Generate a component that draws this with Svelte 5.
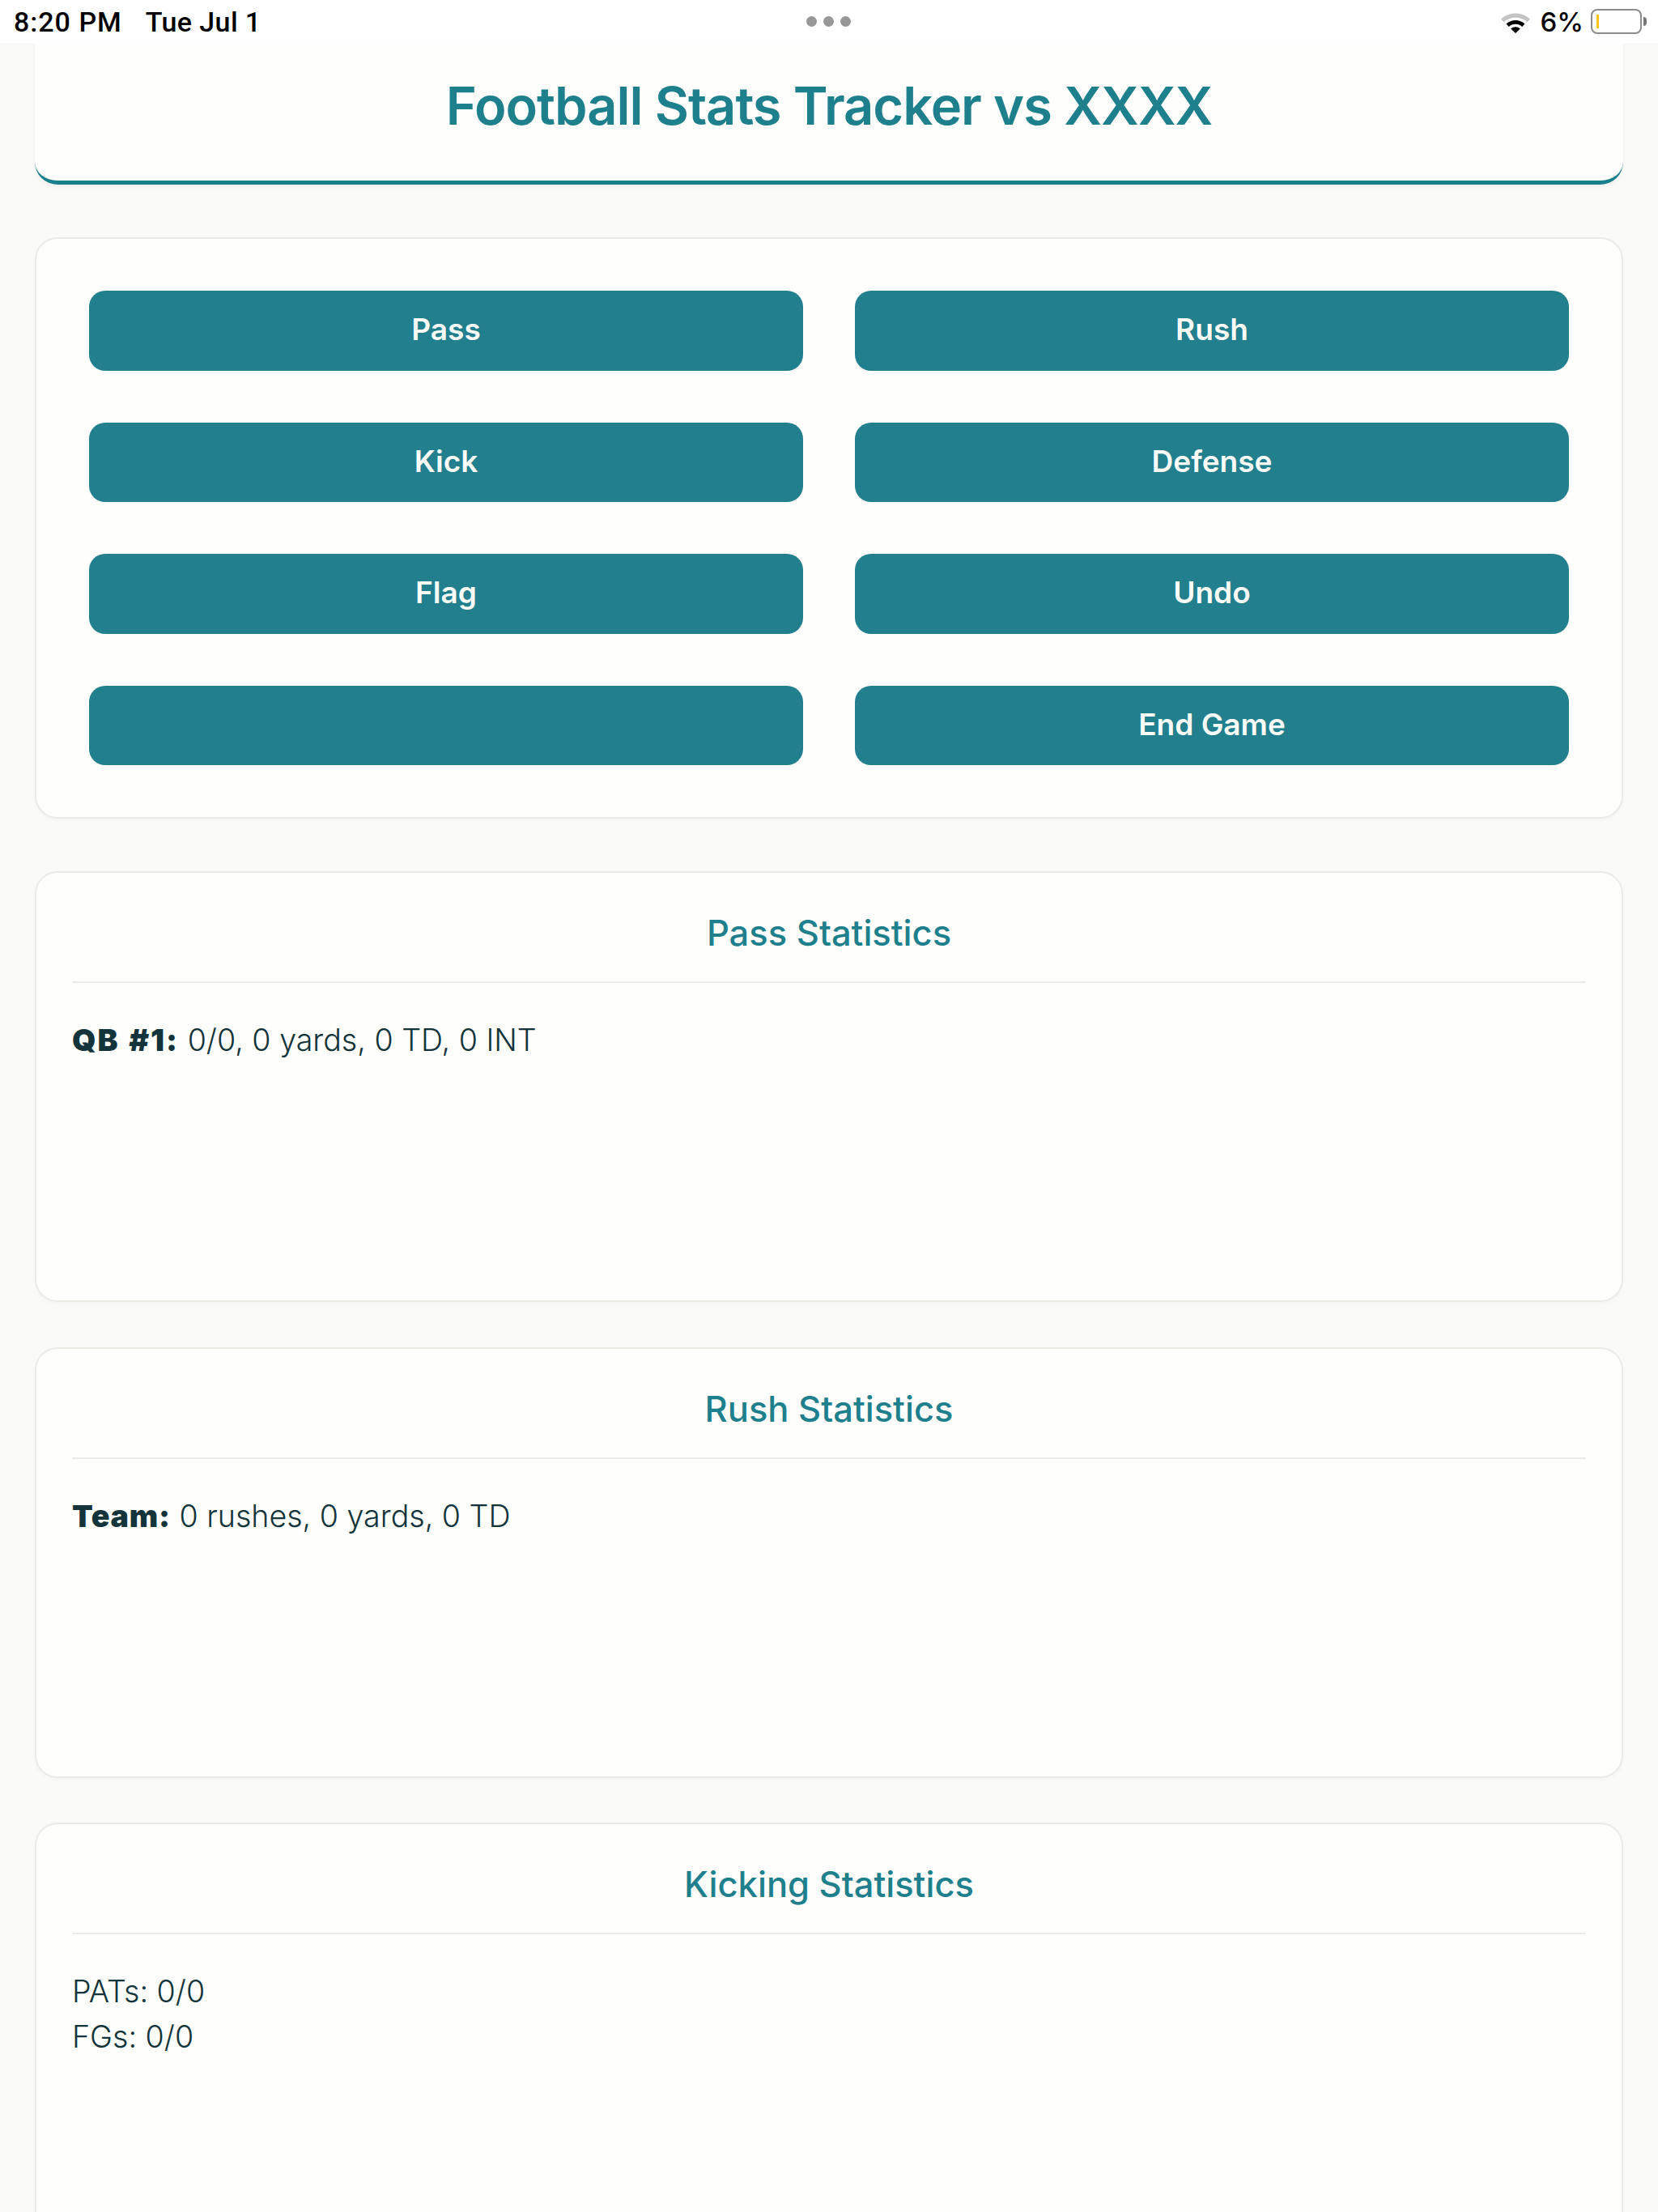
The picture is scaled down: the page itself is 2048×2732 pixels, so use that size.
<script>
	const buttons = ['Pass', 'Rush', 'Kick', 'Defense', 'Flag', 'Undo', '', 'End Game'];
</script>

<div class="page">
	<div class="status-bar">
		<div class="status-left">
			<span>8:20 PM</span>
			<span class="date">Tue Jul 1</span>
		</div>
		<div class="dots"><i></i><i></i><i></i></div>
		<div class="status-right">
			<svg class="wifi" width="38" height="28" viewBox="0 0 38 28">
				<path d="M1 10.5C11 1 27 1 37 10.5L33.5 14.2C25.5 6.8 12.5 6.8 4.5 14.2Z" fill="#c4c4c4" />
				<path d="M7.5 16.6C14 10.4 24 10.4 30.5 16.6L27.2 20C22.5 15.6 15.5 15.6 10.8 20Z" fill="#000" />
				<path d="M13.2 22.4C16.5 19.4 21.5 19.4 24.8 22.4L19 28Z" fill="#000" />
			</svg>
			<span class="percent">6%</span>
			<div class="battery"><div class="charge"></div></div>
			<div class="nub"></div>
		</div>
	</div>

	<main class="container">
		<header class="title-card">
			<h1>Football Stats Tracker vs XXXX</h1>
		</header>

		<section class="card controls">
			{#each buttons as label}
				<button>{label}</button>
			{/each}
		</section>

		<section class="card stats">
			<h2>Pass Statistics</h2>
			<div class="stat-body">
				<p><strong class="wide">QB #1:</strong> 0/0, 0 yards, 0 TD, 0 INT</p>
			</div>
		</section>

		<section class="card stats">
			<h2>Rush Statistics</h2>
			<div class="stat-body">
				<p><strong>Team:</strong> 0 rushes, 0 yards, 0 TD</p>
			</div>
		</section>

		<section class="card stats">
			<h2>Kicking Statistics</h2>
			<div class="stat-body">
				<p>PATs: 0/0</p>
				<p>FGs: 0/0</p>
			</div>
		</section>
	</main>
</div>

<style>
	:global(body) {
		margin: 0;
		background: #fafaf8;
	}

	.page {
		height: 2732px;
		overflow: hidden;
		font-family: Inter, 'Liberation Sans', sans-serif;
		color: #13343b;
	}

	.status-bar {
		position: relative;
		z-index: 2;
		height: 53px;
		padding: 0 14px 0 17px;
		box-sizing: border-box;
		display: flex;
		align-items: center;
		justify-content: space-between;
		background: #fff;
		color: #000;
		font-size: 34px;
		font-family: Roboto, sans-serif;
		font-weight: 500;
	}

	.status-left {
		display: flex;
		gap: 29px;
		letter-spacing: 1px;
	}

	.date {
		letter-spacing: 0.4px;
	}

	.dots {
		position: absolute;
		left: 996px;
		top: 20px;
		display: flex;
		gap: 8px;
	}

	.dots i {
		width: 13px;
		height: 13px;
		border-radius: 50%;
		background: #979797;
	}

	.status-right {
		display: flex;
		align-items: center;
	}

	.wifi {
		margin-right: 11px;
	}

	.percent {
		font-family: Inter, sans-serif;
		font-size: 33px;
		font-weight: 500;
		margin-right: 9px;
	}

	.battery {
		width: 63px;
		height: 31px;
		box-sizing: border-box;
		border: 2px solid #8c8c8c;
		border-radius: 8px;
		padding: 5px;
		margin-right: 2px;
	}

	.charge {
		width: 3px;
		height: 100%;
		background: #f5c518;
	}

	.nub {
		width: 4px;
		height: 11px;
		background: #777;
		border-radius: 0 6px 6px 0;
	}

	.container {
		padding: 0 43px;
		margin-top: -30px;
		display: flex;
		flex-direction: column;
		gap: 55.5px;
	}

	.title-card {
		height: 205px;
		box-sizing: border-box;
		padding-top: 14px;
		display: flex;
		align-items: center;
		justify-content: center;
		background: #fefefc;
		border-bottom: 5px solid #1a7f8c;
		border-radius: 28px;
		box-shadow: 0 2px 6px rgba(0, 0, 0, 0.05);
		margin-bottom: 9.5px;
	}

	h1 {
		margin: 0;
		font-size: 65px;
		font-weight: 600;
		letter-spacing: -1.05px;
		color: #1f808d;
	}

	.card {
		background: #fefefc;
		border: 2px solid #ebebe6;
		border-radius: 28px;
		box-shadow: 0 2px 5px rgba(0, 0, 0, 0.03);
		box-sizing: border-box;
	}

	.controls {
		height: 718px;
		padding: 64px 65px;
		margin-bottom: 9.5px;
		display: grid;
		grid-template-columns: 1fr 1fr;
		gap: 64px;
		grid-auto-rows: 98.5px;
	}

	button {
		border: none;
		border-radius: 20px;
		padding: 0 0 3px;
		background: #217f8e;
		color: #fcfcf9;
		font-family: inherit;
		font-size: 37px;
		font-weight: 600;
	}

	.stats {
		height: 532px;
		padding: 44px 44px 0;
		flex-shrink: 0;
	}

	h2 {
		margin: 0;
		padding-bottom: 30px;
		border-bottom: 2px solid #ebebe8;
		text-align: center;
		font-size: 43.5px;
		line-height: 60px;
		font-weight: 500;
		color: #1f808d;
	}

	.stat-body {
		padding-top: 43px;
	}

	p {
		margin: 0;
		font-size: 37.6px;
		line-height: 56px;
		font-weight: 300;
	}

	strong {
		font-weight: 900;
		letter-spacing: 0.8px;
	}

	.wide {
		letter-spacing: 2px;
		word-spacing: 2px;
	}
</style>
